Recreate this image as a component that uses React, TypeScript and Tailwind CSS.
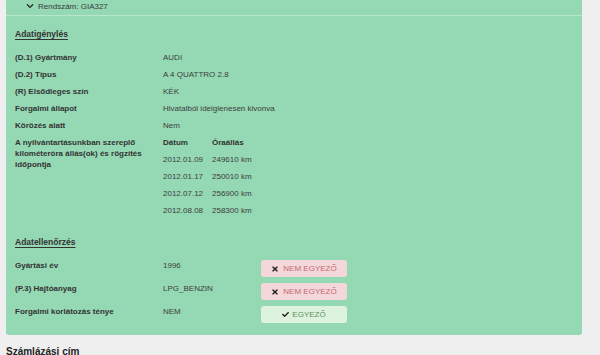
import { FaChevronDown, FaTimes, FaCheck } from 'react-icons/fa';

interface Row {
  label: string;
  value: string;
}

interface CheckRow {
  label: string;
  value: string;
  ok: boolean;
}

const rows: Row[] = [
  { label: '(D.1) Gyártmány', value: 'AUDI' },
  { label: '(D.2) Típus', value: 'A 4 QUATTRO 2.8' },
  { label: '(R) Elsődleges szín', value: 'KÉK' },
  { label: 'Forgalmi állapot', value: 'Hivatalból ideiglenesen kivonva' },
  { label: 'Körözés alatt', value: 'Nem' },
];

const readings = [
  { date: '2012.01.09', km: '249610 km' },
  { date: '2012.01.17', km: '250010 km' },
  { date: '2012.07.12', km: '256900 km' },
  { date: '2012.08.08', km: '258300 km' },
];

const checks: CheckRow[] = [
  { label: 'Gyártási év', value: '1996', ok: false },
  { label: '(P.3) Hajtóanyag', value: 'LPG_BENZIN', ok: false },
  { label: 'Forgalmi korlátozás ténye', value: 'NEM', ok: true },
];

// Egyezés jelző gomb
const MatchBadge = ({ ok }: { ok: boolean }) => {
  if (ok) {
    return (
      <span className="w-[86px] h-[17px] rounded-[3px] bg-[#def3dd] text-[#5e8f5e] flex items-center justify-center gap-[3px]">
        <FaCheck className="text-[#222] w-[7px] h-[7px]" />
        EGYEZŐ
      </span>
    );
  }
  return (
    <span className="w-[86px] h-[17px] rounded-[3px] bg-[#f4d7da] text-[#c4676e] flex items-center justify-center gap-[4px]">
      <FaTimes className="text-[#222] w-[8px] h-[8px]" />
      NEM EGYEZŐ
    </span>
  );
};

export default function App() {
  return (
    <div className="w-[600px] h-[355px] overflow-hidden bg-[#efefef] font-['Liberation_Sans',Arial,sans-serif] text-[8px] leading-[11px] text-[#333]">
      <div className="ml-[6px] w-[576px] bg-[#95d8b4] rounded-b-[3px] pb-[6px]">
        {/* Fejléc */}
        <div className="h-[16px] pl-[20px] pt-[0.5px] flex items-start gap-[4px] border-b border-[#b6e7cc]">
          <FaChevronDown className="w-[8px] h-[8px] mt-[1.5px] text-[#2a2a2a]" />
          <span className="text-[#3a3a3a]">Rendszám: GIA327</span>
        </div>

        <div className="pl-[9px] pt-[12.5px]">
          <h3 className="font-bold text-[8.5px] underline underline-offset-[2px]">Adatigénylés</h3>

          <div className="mt-[9px]">
            {rows.map((row) => (
              <div key={row.label} className="h-[17px] flex items-center">
                <span className="w-[148px] font-bold">{row.label}</span>
                <span className="text-[#3d3d3d]">{row.value}</span>
              </div>
            ))}

            {/* Kilométeróra állások */}
            <div className="flex">
              <div className="w-[148px] pt-[3px] font-bold">
                A nyilvántartásunkban szereplő
                <br />
                kilométeróra állás(ok) és rögzítés
                <br />
                időpontja
              </div>
              <div>
                <div className="h-[17px] flex items-center font-bold">
                  <span className="w-[49px]">Dátum</span>
                  <span>Óraállás</span>
                </div>
                {readings.map((r) => (
                  <div key={r.date} className="h-[17px] flex items-center text-[#3d3d3d]">
                    <span className="w-[49px]">{r.date}</span>
                    <span>{r.km}</span>
                  </div>
                ))}
              </div>
            </div>
          </div>

          <h3 className="mt-[18px] font-bold text-[8.5px] underline underline-offset-[2px]">Adatellenőrzés</h3>

          <div className="mt-[12.5px]">
            {checks.map((c) => (
              <div key={c.label} className="h-[23px] flex items-start">
                <span className="w-[148px] font-bold">{c.label}</span>
                <span className="w-[98px] text-[#3d3d3d]">{c.value}</span>
                <MatchBadge ok={c.ok} />
              </div>
            ))}
          </div>
        </div>
      </div>

      <h2 className="ml-[6px] mt-[11px] font-bold text-[10px] leading-[12px] text-[#222]">Számlázási cím</h2>
    </div>
  );
}
